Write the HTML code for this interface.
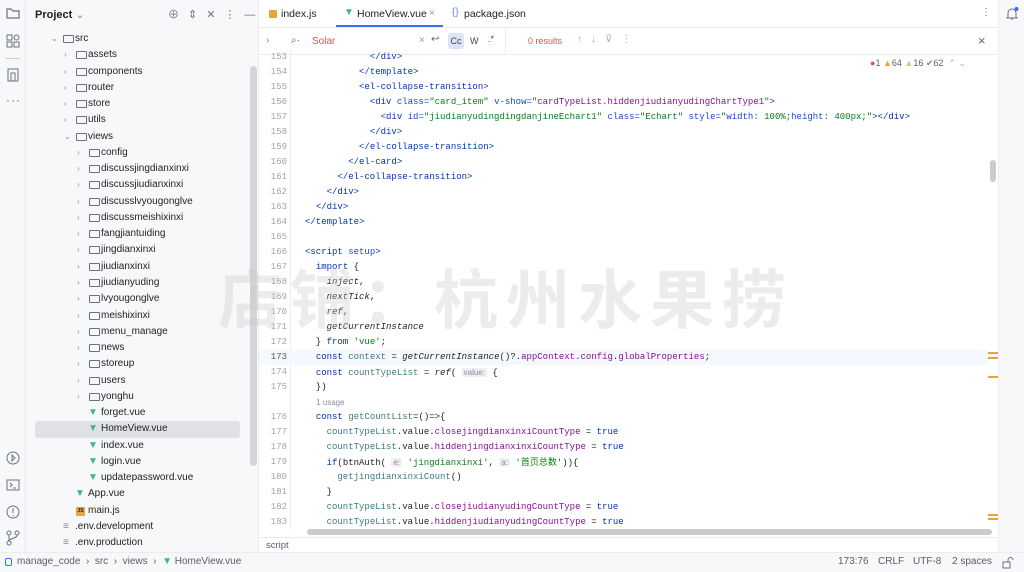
<!DOCTYPE html>
<html><head><meta charset="utf-8"><style>
*{margin:0;padding:0;box-sizing:border-box}
body{width:1024px;height:572px;overflow:hidden;background:#f7f8fa;font-family:"Liberation Sans","Noto Sans CJK SC",sans-serif;font-size:10px;color:#1e1f22;position:relative}
.abs{position:absolute}
.strip{left:0;top:0;width:26px;height:552px;background:#f7f8fa;border-right:1px solid #ebecf0}
.proj{left:26px;top:0;width:233px;height:552px;background:#f7f8fa;border-right:1px solid #ebecf0}
.tree{left:26px;top:31px;width:232px}
.row{height:16.27px;line-height:16.27px;position:relative;white-space:nowrap;font-size:10px}
.row .ar{position:absolute;color:#8c8c8c;font-size:8px}
.row .fd{position:absolute;top:4px;width:11px;height:8px;border:1px solid #6c707e;border-radius:1px}
.row .t{position:absolute}
.row .v{position:absolute;color:#41b883;font-size:10px;font-weight:bold}
.sel{background:#dfe1e5;border-radius:3px}
.editor{left:259px;top:0;width:739px;height:552px;background:#fff}
.tabs{left:259px;top:0;width:739px;height:28px;border-bottom:1px solid #ebecf0;background:#fff}
.search{left:259px;top:28px;width:739px;height:27px;border-bottom:1px solid #ebecf0;background:#fff}
.code{left:259px;top:50px;width:730px;font-family:"Liberation Mono",monospace;font-size:9px}
.l{height:15px;line-height:15px;position:relative;white-space:pre}
.l .n{position:absolute;left:0;width:28px;text-align:right;color:#a0a3aa}
.l .c{position:absolute;left:46px}
.k{color:#0033b3}.a{color:#174ad4}.s{color:#067d17}.p{color:#871094}.vv{color:#3b7d7d}.i{font-style:italic}
.hint{background:#eef0f3;color:#8a8d93;font-family:"Liberation Sans",sans-serif;font-size:8px;padding:0 2px;border-radius:2px}
.right{left:998px;top:0;width:26px;height:552px;background:#f7f8fa;border-left:1px solid #ebecf0}
.status{left:0;top:552px;width:1024px;height:20px;background:#f7f8fa;border-top:1px solid #ebecf0;font-size:10px;color:#5a5d63;white-space:nowrap}
.wm{left:218px;top:250px;font-size:64px;font-weight:bold;color:rgba(200,200,200,.35);letter-spacing:8px;white-space:nowrap}
</style></head><body>
<div class="abs strip">
 <svg class="abs" style="left:5px;top:5px" width="16" height="16"><path d="M2 4h4l2 2h6v7H2z" fill="none" stroke="#6c707e" stroke-width="1.2"/></svg>
 <svg class="abs" style="left:5px;top:33px" width="16" height="16"><rect x="2" y="2" width="5" height="5" fill="none" stroke="#6c707e"/><rect x="2" y="9" width="5" height="5" fill="none" stroke="#6c707e"/><rect x="9" y="9" width="5" height="5" fill="none" stroke="#6c707e"/><circle cx="11.5" cy="4.5" r="2.5" fill="none" stroke="#6c707e"/></svg>
 <div class="abs" style="left:6px;top:58px;width:14px;height:1px;background:#ccc"></div>
 <svg class="abs" style="left:5px;top:67px" width="16" height="16"><rect x="3" y="2" width="10" height="12" fill="none" stroke="#6c707e"/><path d="M6 14V6h4v8" fill="none" stroke="#6c707e"/></svg>
 <div class="abs" style="left:6px;top:93px;color:#6c707e;font-size:12px;letter-spacing:1px">···</div>
 <svg class="abs" style="left:5px;top:450px" width="16" height="16"><circle cx="8" cy="8" r="6" fill="none" stroke="#6c707e"/><path d="M7 5l3 3-3 3z" fill="none" stroke="#6c707e"/></svg>
 <svg class="abs" style="left:5px;top:477px" width="16" height="16"><rect x="2" y="3" width="12" height="10" fill="none" stroke="#6c707e"/><path d="M5 6l2 2-2 2M8 11h3" fill="none" stroke="#6c707e"/></svg>
 <svg class="abs" style="left:5px;top:504px" width="16" height="16"><circle cx="8" cy="8" r="6" fill="none" stroke="#6c707e"/><path d="M8 4v5M8 11v1" stroke="#6c707e"/></svg>
 <svg class="abs" style="left:5px;top:530px" width="16" height="16"><circle cx="4" cy="3" r="2" fill="none" stroke="#6c707e"/><circle cx="12" cy="3" r="2" fill="none" stroke="#6c707e"/><circle cx="4" cy="13" r="2" fill="none" stroke="#6c707e"/><path d="M4 5v6M12 5c0 4-8 3-8 6" fill="none" stroke="#6c707e"/></svg>
</div>
<div class="abs proj">
 <div class="abs" style="left:9px;top:8px;font-weight:bold;font-size:11px">Project <span style="font-weight:normal;color:#888">⌄</span></div>
 <div class="abs" style="left:142px;top:6px;color:#6c707e;font-size:11px;letter-spacing:9px;white-space:nowrap">⊕⇕✕⋮—</div>
 <div class="abs" style="left:224px;top:66px;width:7px;height:400px;background:#d4d5d8;border-radius:4px"></div>
</div>
<div class="abs tree">
 <div class="row"><span class="ar" style="left:25px">⌄</span><span class="fd" style="left:37px"></span><span class="t" style="left:49px">src</span></div>
 <div class="row"><span class="ar" style="left:38px">›</span><span class="fd" style="left:50px"></span><span class="t" style="left:62px">assets</span></div>
 <div class="row"><span class="ar" style="left:38px">›</span><span class="fd" style="left:50px"></span><span class="t" style="left:62px">components</span></div>
 <div class="row"><span class="ar" style="left:38px">›</span><span class="fd" style="left:50px"></span><span class="t" style="left:62px">router</span></div>
 <div class="row"><span class="ar" style="left:38px">›</span><span class="fd" style="left:50px"></span><span class="t" style="left:62px">store</span></div>
 <div class="row"><span class="ar" style="left:38px">›</span><span class="fd" style="left:50px"></span><span class="t" style="left:62px">utils</span></div>
 <div class="row"><span class="ar" style="left:38px">⌄</span><span class="fd" style="left:50px"></span><span class="t" style="left:62px">views</span></div>
 <div class="row"><span class="ar" style="left:51px">›</span><span class="fd" style="left:63px"></span><span class="t" style="left:75px">config</span></div>
 <div class="row"><span class="ar" style="left:51px">›</span><span class="fd" style="left:63px"></span><span class="t" style="left:75px">discussjingdianxinxi</span></div>
 <div class="row"><span class="ar" style="left:51px">›</span><span class="fd" style="left:63px"></span><span class="t" style="left:75px">discussjiudianxinxi</span></div>
 <div class="row"><span class="ar" style="left:51px">›</span><span class="fd" style="left:63px"></span><span class="t" style="left:75px">discusslvyougonglve</span></div>
 <div class="row"><span class="ar" style="left:51px">›</span><span class="fd" style="left:63px"></span><span class="t" style="left:75px">discussmeishixinxi</span></div>
 <div class="row"><span class="ar" style="left:51px">›</span><span class="fd" style="left:63px"></span><span class="t" style="left:75px">fangjiantuiding</span></div>
 <div class="row"><span class="ar" style="left:51px">›</span><span class="fd" style="left:63px"></span><span class="t" style="left:75px">jingdianxinxi</span></div>
 <div class="row"><span class="ar" style="left:51px">›</span><span class="fd" style="left:63px"></span><span class="t" style="left:75px">jiudianxinxi</span></div>
 <div class="row"><span class="ar" style="left:51px">›</span><span class="fd" style="left:63px"></span><span class="t" style="left:75px">jiudianyuding</span></div>
 <div class="row"><span class="ar" style="left:51px">›</span><span class="fd" style="left:63px"></span><span class="t" style="left:75px">lvyougonglve</span></div>
 <div class="row"><span class="ar" style="left:51px">›</span><span class="fd" style="left:63px"></span><span class="t" style="left:75px">meishixinxi</span></div>
 <div class="row"><span class="ar" style="left:51px">›</span><span class="fd" style="left:63px"></span><span class="t" style="left:75px">menu_manage</span></div>
 <div class="row"><span class="ar" style="left:51px">›</span><span class="fd" style="left:63px"></span><span class="t" style="left:75px">news</span></div>
 <div class="row"><span class="ar" style="left:51px">›</span><span class="fd" style="left:63px"></span><span class="t" style="left:75px">storeup</span></div>
 <div class="row"><span class="ar" style="left:51px">›</span><span class="fd" style="left:63px"></span><span class="t" style="left:75px">users</span></div>
 <div class="row"><span class="ar" style="left:51px">›</span><span class="fd" style="left:63px"></span><span class="t" style="left:75px">yonghu</span></div>
 <div class="row"><span class="v" style="left:62px">▼</span><span class="t" style="left:75px">forget.vue</span></div>
 <div class="row sel" style="margin:0 18px 0 9px"><span class="v" style="left:53px">▼</span><span class="t" style="left:66px">HomeView.vue</span></div>
 <div class="row"><span class="v" style="left:62px">▼</span><span class="t" style="left:75px">index.vue</span></div>
 <div class="row"><span class="v" style="left:62px">▼</span><span class="t" style="left:75px">login.vue</span></div>
 <div class="row"><span class="v" style="left:62px">▼</span><span class="t" style="left:75px">updatepassword.vue</span></div>
 <div class="row"><span class="v" style="left:49px">▼</span><span class="t" style="left:62px">App.vue</span></div>
 <div class="row"><span class="abs" style="left:50px;top:4px;width:9px;height:9px;background:#e8a33b;border-radius:1px;font-size:5px;line-height:9px;text-align:center;font-weight:bold">JS</span><span class="t" style="left:62px">main.js</span></div>
 <div class="row"><span class="t" style="left:37px;color:#888">≡</span><span class="t" style="left:49px">.env.development</span></div>
 <div class="row"><span class="t" style="left:37px;color:#888">≡</span><span class="t" style="left:49px">.env.production</span></div>
</div>
<div class="abs editor"></div>
<div class="abs tabs">
 <span class="abs" style="left:10px;top:10px;width:8px;height:8px;background:#e8a33b;border-radius:1px"></span><span class="abs" style="left:22px;top:8px;font-size:10.5px">index.js</span>
 <span class="abs" style="left:85px;top:7px;color:#41b883;font-weight:bold">▼</span><span class="abs" style="left:98px;top:8px;font-size:10.5px">HomeView.vue</span><span class="abs" style="left:170px;top:8px;color:#999">×</span>
 <div class="abs" style="left:77px;top:25px;width:107px;height:2px;background:#3574f0"></div>
 <span class="abs" style="left:193px;top:7px;color:#6b7ff0">{}</span><span class="abs" style="left:205px;top:8px;font-size:10.5px">package.json</span>
 <span class="abs" style="left:722px;top:7px;color:#666">⋮</span>
</div>
<div class="abs search">
 <span class="abs" style="left:7px;top:7px;color:#888">›</span>
 <span class="abs" style="left:32px;top:7px;color:#666">⌕·</span>
 <span class="abs" style="left:53px;top:8px;color:#d9534f;font-size:10px">Solar</span>
 <span class="abs" style="left:160px;top:7px;color:#999">×</span><span class="abs" style="left:172px;top:6px;color:#666">↩</span>
 <span class="abs" style="left:189px;top:5px;width:16px;height:16px;background:#dbe3f7;border-radius:3px;text-align:center;line-height:16px;color:#444;font-size:9px">Cc</span>
 <span class="abs" style="left:211px;top:8px;color:#444;font-size:9px">W</span><span class="abs" style="left:229px;top:6px;color:#444;font-size:9px">.*</span>
 <div class="abs" style="left:246px;top:0;width:1px;height:27px;background:#ebecf0"></div>
 <span class="abs" style="left:269px;top:8px;color:#d9534f;font-size:9px">0 results</span>
 <span class="abs" style="left:318px;top:6px;color:#aaa;letter-spacing:9px;white-space:nowrap">↑↓⊽⋮</span>
 <span class="abs" style="left:719px;top:5px;color:#666;font-size:13px">×</span>
</div>
<div class="abs" style="left:870px;top:58px;font-size:9px;color:#5a5d63;white-space:nowrap"><span style="color:#d9534f">●</span>1 <span style="color:#e8a33b">▲</span>64 <span style="color:#d9c48a">▲</span>16 <span style="color:#5aa05a">✔</span>62 <span style="color:#aaa">&nbsp;⌃ ⌄</span></div>
<div class="abs" style="left:290px;top:50px;width:1px;height:480px;background:#ebecf0"></div>
<div class="abs code">
<div class="l"><span class="n">153</span><span class="c">            <span class="k">&lt;/div&gt;</span></span></div>
<div class="l"><span class="n">154</span><span class="c">          <span class="k">&lt;/template&gt;</span></span></div>
<div class="l"><span class="n">155</span><span class="c">          <span class="k">&lt;el-collapse-transition&gt;</span></span></div>
<div class="l"><span class="n">156</span><span class="c">            <span class="k">&lt;div </span><span class="a">class=</span><span class="s">"card_item"</span> <span class="a">v-show=</span><span class="s">"<span class="p">cardTypeList.hiddenjiudianyudingChartType1</span>"</span><span class="k">&gt;</span></span></div>
<div class="l"><span class="n">157</span><span class="c">              <span class="k">&lt;div </span><span class="a">id=</span><span class="s">"jiudianyudingdingdanjineEchart1"</span> <span class="a">class=</span><span class="s">"Echart"</span> <span class="a">style=</span><span class="s">"<span class="a">width</span>: 100%;<span class="a">height</span>: 400px;"</span><span class="k">&gt;&lt;/div&gt;</span></span></div>
<div class="l"><span class="n">158</span><span class="c">            <span class="k">&lt;/div&gt;</span></span></div>
<div class="l"><span class="n">159</span><span class="c">          <span class="k">&lt;/el-collapse-transition&gt;</span></span></div>
<div class="l"><span class="n">160</span><span class="c">        <span class="k">&lt;/el-card&gt;</span></span></div>
<div class="l"><span class="n">161</span><span class="c">      <span class="k">&lt;/el-collapse-transition&gt;</span></span></div>
<div class="l"><span class="n">162</span><span class="c">    <span class="k">&lt;/div&gt;</span></span></div>
<div class="l"><span class="n">163</span><span class="c">  <span class="k">&lt;/div&gt;</span></span></div>
<div class="l"><span class="n">164</span><span class="c"><span class="k">&lt;/template&gt;</span></span></div>
<div class="l"><span class="n">165</span><span class="c"></span></div>
<div class="l"><span class="n">166</span><span class="c"><span class="k">&lt;script </span><span class="a">setup</span><span class="k">&gt;</span></span></div>
<div class="l"><span class="n">167</span><span class="c">  <span class="k">import</span> {</span></div>
<div class="l"><span class="n">168</span><span class="c">    <span class="i">inject</span>,</span></div>
<div class="l"><span class="n">169</span><span class="c">    <span class="i">nextTick</span>,</span></div>
<div class="l"><span class="n">170</span><span class="c">    <span class="i">ref</span>,</span></div>
<div class="l"><span class="n">171</span><span class="c">    <span class="i">getCurrentInstance</span></span></div>
<div class="l"><span class="n">172</span><span class="c">  } <span class="k">from</span> <span class="s">'vue'</span>;</span></div>
<div class="l" style="background:#f5f8fe"><span class="n" style="color:#555">173</span><span class="c">  <span class="k">const</span> <span class="vv">context</span> = <span class="i">getCurrentInstance</span>()?.<span class="p">appContext</span>.<span class="p">config</span>.<span class="p">globalProperties</span>;</span></div>
<div class="l"><span class="n">174</span><span class="c">  <span class="k">const</span> <span class="vv">countTypeList</span> = <span class="i">ref</span>( <span class="hint">value:</span> {</span></div>
<div class="l"><span class="n">175</span><span class="c">  })</span></div>
<div class="l"><span class="c" style="font-family:'Liberation Sans',sans-serif;font-size:8px;color:#8a8d93">  &nbsp;&nbsp;&nbsp;1 usage</span></div>
<div class="l"><span class="n">176</span><span class="c">  <span class="k">const</span> <span class="vv">getCountList</span>=()=&gt;{</span></div>
<div class="l"><span class="n">177</span><span class="c">    <span class="vv">countTypeList</span>.value.<span class="p">closejingdianxinxiCountType</span> = <span class="k">true</span></span></div>
<div class="l"><span class="n">178</span><span class="c">    <span class="vv">countTypeList</span>.value.<span class="p">hiddenjingdianxinxiCountType</span> = <span class="k">true</span></span></div>
<div class="l"><span class="n">179</span><span class="c">    <span class="k">if</span>(btnAuth( <span class="hint">e:</span> <span class="s">'jingdianxinxi'</span>, <span class="hint">a:</span> <span class="s">'首页总数'</span>)){</span></div>
<div class="l"><span class="n">180</span><span class="c">      <span class="vv">getjingdianxinxiCount</span>()</span></div>
<div class="l"><span class="n">181</span><span class="c">    }</span></div>
<div class="l"><span class="n">182</span><span class="c">    <span class="vv">countTypeList</span>.value.<span class="p">closejiudianyudingCountType</span> = <span class="k">true</span></span></div>
<div class="l"><span class="n">183</span><span class="c">    <span class="vv">countTypeList</span>.value.<span class="p">hiddenjiudianyudingCountType</span> = <span class="k">true</span></span></div>
</div>
<div class="abs" style="left:307px;top:529px;width:685px;height:6px;background:#c9cbcf;border-radius:3px"></div>
<div class="abs" style="left:259px;top:537px;width:739px;height:15px;background:#fff;border-top:1px solid #ebecf0"></div>
<div class="abs" style="left:266px;top:540px;font-size:9.5px;color:#5a5d63">script</div>
<div class="abs" style="left:990px;top:160px;width:6px;height:22px;background:#c9cbcf;border-radius:3px"></div>
<div class="abs" style="left:988px;top:352px;width:10px;height:2px;background:#e8a33b"></div>
<div class="abs" style="left:988px;top:357px;width:10px;height:2px;background:#e8a33b"></div>
<div class="abs" style="left:988px;top:376px;width:10px;height:2px;background:#e8a33b"></div>
<div class="abs" style="left:988px;top:514px;width:10px;height:2px;background:#e8a33b"></div>
<div class="abs" style="left:988px;top:518px;width:10px;height:2px;background:#e8a33b"></div>
<div class="abs right">
 <svg class="abs" style="left:5px;top:6px" width="16" height="16"><path d="M4 11V7a4 4 0 0 1 8 0v4l1 1H3zM7 13h2" fill="none" stroke="#6c707e"/><circle cx="12.5" cy="3" r="2" fill="#3574f0"/></svg>
</div>
<div class="abs wm">店铺：杭州水果捞</div>
<div class="abs status">
 <span class="abs" style="left:5px;top:5px;width:7px;height:8px;border:1px solid #3574f0;border-radius:2px"></span>
 <span class="abs" style="left:17px;top:3px">manage_code &nbsp;›&nbsp; src &nbsp;›&nbsp; views &nbsp;›&nbsp; <span style="color:#41b883;font-weight:bold">▼</span> HomeView.vue</span>
 <span class="abs" style="left:838px;top:3px">173:76</span>
 <span class="abs" style="left:878px;top:3px">CRLF</span>
 <span class="abs" style="left:913px;top:3px">UTF-8</span>
 <span class="abs" style="left:952px;top:3px">2 spaces</span>
 <svg class="abs" style="left:1002px;top:4px" width="12" height="12"><rect x="1" y="5" width="7" height="6" fill="none" stroke="#6c707e"/><path d="M6 5V3a2.5 2.5 0 0 1 5 0" fill="none" stroke="#6c707e"/></svg>
</div>
</body></html>
